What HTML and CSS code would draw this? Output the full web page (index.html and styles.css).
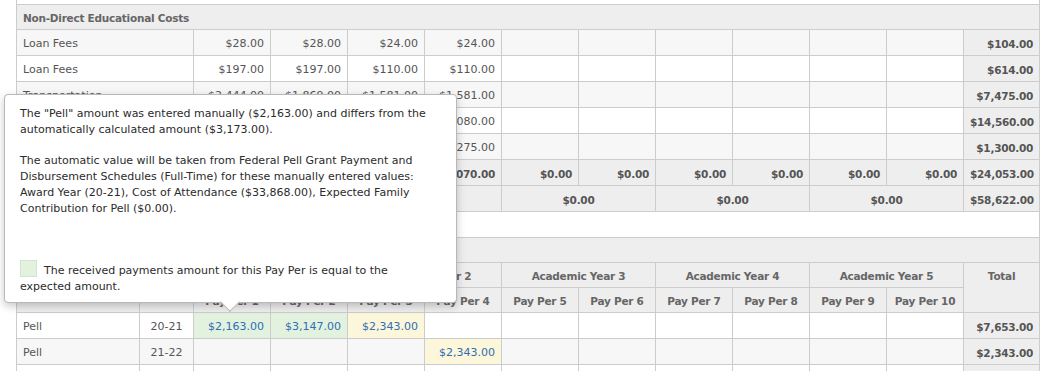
FILE: index.html
```html
<!DOCTYPE html>
<html lang="en">
<head>
<meta charset="utf-8">
<title>Cost of Attendance</title>
<link rel="stylesheet" href="styles.css">
</head>
<body>
<div class="page">
  <div class="cut-row"></div>
  <table class="grid">
    <colgroup>
      <col class="c-label"><col class="c-year">
      <col class="c-pp"><col class="c-pp"><col class="c-pp"><col class="c-pp"><col class="c-pp">
      <col class="c-pp"><col class="c-pp"><col class="c-pp"><col class="c-pp"><col class="c-pp">
      <col class="c-total">
    </colgroup>
    <tbody>
      <tr class="section"><th colspan="13">Non-Direct Educational Costs</th></tr>
      <tr class="alt">
        <td colspan="2">Loan Fees</td>
        <td class="num">$28.00</td><td class="num">$28.00</td><td class="num">$24.00</td><td class="num">$24.00</td>
        <td></td><td></td><td></td><td></td><td></td><td></td>
        <td class="tot">$104.00</td>
      </tr>
      <tr>
        <td colspan="2">Loan Fees</td>
        <td class="num">$197.00</td><td class="num">$197.00</td><td class="num">$110.00</td><td class="num">$110.00</td>
        <td></td><td></td><td></td><td></td><td></td><td></td>
        <td class="tot">$614.00</td>
      </tr>
      <tr class="alt">
        <td colspan="2">Transportation</td>
        <td class="num">$2,444.00</td><td class="num">$1,869.00</td><td class="num">$1,581.00</td><td class="num">$1,581.00</td>
        <td></td><td></td><td></td><td></td><td></td><td></td>
        <td class="tot">$7,475.00</td>
      </tr>
      <tr>
        <td colspan="2">Room and Board</td>
        <td class="num">$3,800.00</td><td class="num">$3,800.00</td><td class="num">$3,880.00</td><td class="num">$3,080.00</td>
        <td></td><td></td><td></td><td></td><td></td><td></td>
        <td class="tot">$14,560.00</td>
      </tr>
      <tr class="alt">
        <td colspan="2">Personal Expenses</td>
        <td class="num">$325.00</td><td class="num">$325.00</td><td class="num">$375.00</td><td class="num">$275.00</td>
        <td></td><td></td><td></td><td></td><td></td><td></td>
        <td class="tot">$1,300.00</td>
      </tr>
      <tr class="sum">
        <td colspan="2">Total per Pay Per</td>
        <td class="num">$6,794.00</td><td class="num">$6,219.00</td><td class="num">$5,970.00</td><td class="num">$5,070.00</td>
        <td class="num">$0.00</td><td class="num">$0.00</td><td class="num">$0.00</td><td class="num">$0.00</td><td class="num">$0.00</td><td class="num">$0.00</td>
        <td class="tot">$24,053.00</td>
      </tr>
      <tr class="sum">
        <td colspan="2">Total per Year</td>
        <td colspan="2" class="mid">$13,013.00</td><td colspan="2" class="mid">$11,040.00</td>
        <td colspan="2" class="mid">$0.00</td><td colspan="2" class="mid">$0.00</td><td colspan="2" class="mid">$0.00</td>
        <td class="tot">$58,622.00</td>
      </tr>
      <tr class="blank"><td colspan="13"></td></tr>
      <tr class="section"><th colspan="13">Grants</th></tr>
      <tr class="head">
        <th rowspan="2" class="left">Fund</th><th rowspan="2">Year</th>
        <th colspan="2">Academic Year 1</th><th colspan="2">Academic Year 2</th><th colspan="2">Academic Year 3</th>
        <th colspan="2">Academic Year 4</th><th colspan="2">Academic Year 5</th>
        <th rowspan="2" class="top">Total</th>
      </tr>
      <tr class="head">
        <th>Pay Per 1</th><th>Pay Per 2</th><th>Pay Per 3</th><th>Pay Per 4</th><th>Pay Per 5</th>
        <th>Pay Per 6</th><th>Pay Per 7</th><th>Pay Per 8</th><th>Pay Per 9</th><th>Pay Per 10</th>
      </tr>
      <tr>
        <td>Pell</td><td class="mid">20-21</td>
        <td class="num val ok">$2,163.00</td><td class="num val ok">$3,147.00</td><td class="num val warn">$2,343.00</td>
        <td></td><td></td><td></td><td></td><td></td><td></td><td></td>
        <td class="tot">$7,653.00</td>
      </tr>
      <tr class="alt">
        <td>Pell</td><td class="mid">21-22</td>
        <td></td><td></td><td></td><td class="num val warn">$2,343.00</td>
        <td></td><td></td><td></td><td></td><td></td><td></td>
        <td class="tot">$2,343.00</td>
      </tr>
      <tr>
        <td>FSEOG</td><td class="mid">20-21</td>
        <td></td><td></td><td></td><td></td><td></td><td></td><td></td><td></td><td></td><td></td>
        <td class="tot">$0.00</td>
      </tr>
    </tbody>
  </table>

  <div class="tip" role="tooltip">
    <p>The "Pell" amount was entered manually ($2,163.00) and differs from the automatically calculated amount ($3,173.00).</p>
    <p>The automatic value will be taken from Federal Pell Grant Payment and Disbursement Schedules (Full-Time) for these manually entered values: Award Year (20-21), Cost of Attendance ($33,868.00), Expected Family Contribution for Pell ($0.00).</p>
    <p class="legend"><span class="swatch"></span>The received payments amount for this Pay Per is equal to the expected amount.</p>
  </div>
</div>
</body>
</html>
```

FILE: styles.css
```css
* { box-sizing: border-box; }

html, body {
  margin: 0;
  padding: 0;
  background: #fff;
}

body {
  font-family: "DejaVu Sans", Verdana, sans-serif;
  font-size: 11px;
  color: #555;
}

.page {
  position: relative;
  width: 1044px;
  height: 371px;
  padding-left: 16px;
  overflow: hidden;
}

.cut-row {
  width: 1024px;
  height: 4px;
  border-left: 1px solid #ccc;
  border-right: 1px solid #ccc;
}

.grid {
  width: 1024px;
  border-collapse: collapse;
  table-layout: fixed;
}

.c-label { width: 123px; }
.c-year { width: 54px; }
.c-pp { width: 77px; }
.c-total { width: 76px; }

.grid th,
.grid td {
  border: 1px solid #ccc;
  padding: 2px 6px 0;
  height: 26px;
  line-height: 14px;
  white-space: nowrap;
  overflow: hidden;
  text-align: left;
  font-weight: normal;
}

.grid tr.alt td { background: #f7f7f7; }

.grid .section th,
.grid .head th,
.grid tr.sum td,
.grid td.tot {
  font-weight: bold;
  font-size: 10.5px;
  letter-spacing: -0.25px;
}

.grid .section th {
  height: 25px;
  padding-top: 1px;
  background: #eee;
  color: #666;
}

.grid .head th {
  height: 25px;
  padding-top: 2px;
  background: #eee;
  color: #666;
  text-align: center;
}

.grid .head th.left { text-align: left; }
.grid .head th.top { vertical-align: top; padding-top: 6px; }

.grid .blank td { background: #fff; }

.grid td.num { text-align: right; }
.grid td.mid { text-align: center; }

.grid tr.sum td { background: #eee; }

.grid td.tot {
  background: #eee;
  text-align: right;
}

.grid tr.alt td.tot { background: #eee; }

.grid td.val { color: #2f6fb4; }
.grid td.ok { background: #e2f2df; }
.grid td.warn,
.grid tr.alt td.warn { background: #fcf6da; }

.tip {
  position: absolute;
  left: 4px;
  top: 94px;
  width: 453px;
  height: 209px;
  padding: 11px 15px 8px;
  background: #fff;
  border: 1px solid #b8b8b8;
  border-radius: 4px;
  box-shadow: 0 3px 8px rgba(0, 0, 0, 0.22);
  color: #2b2b2b;
  font-size: 11px;
  line-height: 16px;
}

.tip::after {
  content: "";
  position: absolute;
  left: 218px;
  bottom: -7px;
  width: 13px;
  height: 13px;
  background: #fff;
  border-right: 1px solid #b8b8b8;
  border-bottom: 1px solid #b8b8b8;
  transform: rotate(45deg);
}

.tip p {
  margin: 0 0 15px;
}

.tip p.legend {
  margin: 46px 0 0;
}

.swatch {
  display: inline-block;
  width: 17px;
  height: 17px;
  margin: -3px 7px 0 0;
  vertical-align: top;
  background: #e2f2df;
  border: 1px solid #d2e4cf;
}
```
